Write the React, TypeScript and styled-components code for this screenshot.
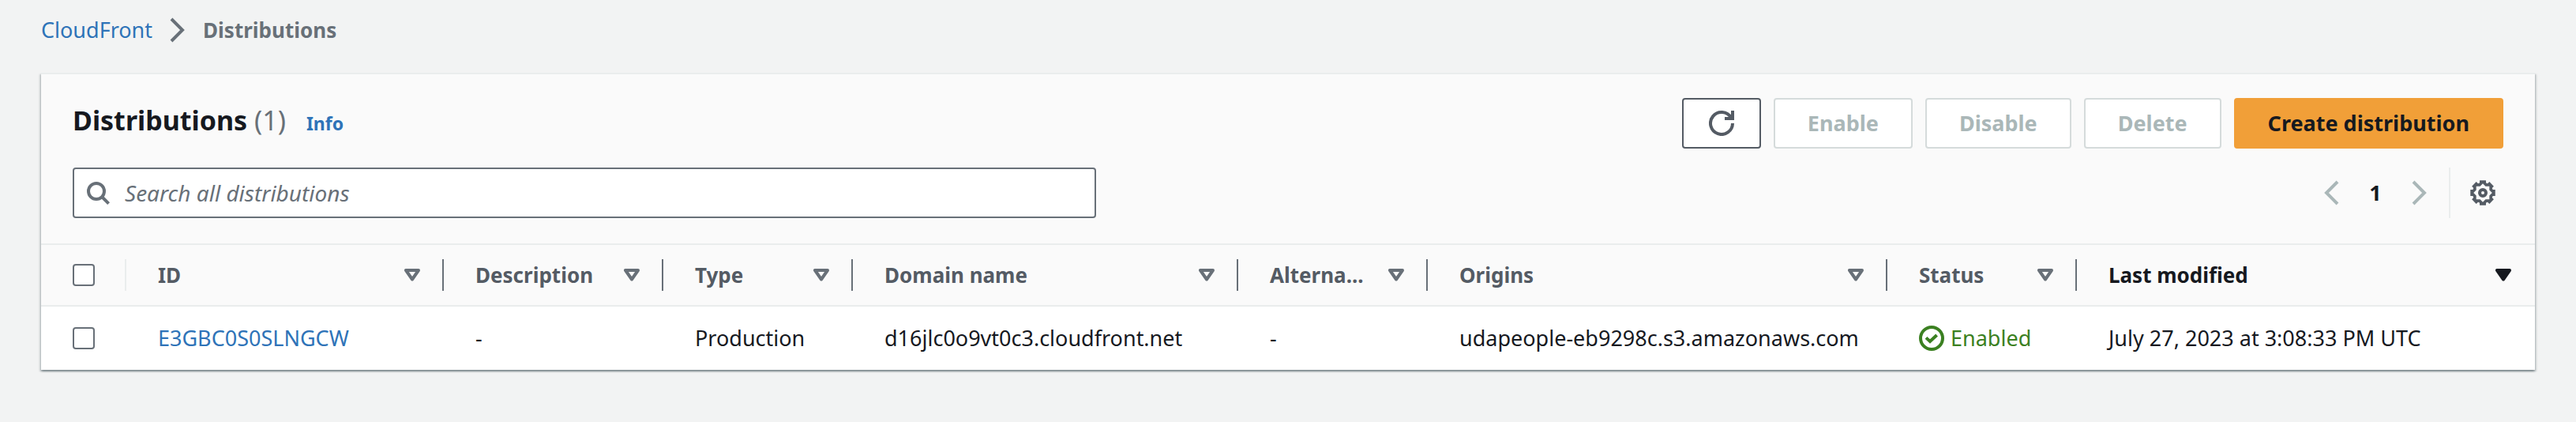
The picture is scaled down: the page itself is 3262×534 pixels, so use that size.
import React from 'react';
import styled, { createGlobalStyle, css } from 'styled-components';

const color = {
  page: '#f2f3f3',
  surface: '#ffffff',
  header: '#fafafa',
  line: '#eaeded',
  text: '#16191f',
  label: '#545b64',
  muted: '#687078',
  disabled: '#aab7b8',
  disabledBorder: '#d5dbdb',
  link: '#2e73b8',
  accent: '#f19f38',
  success: '#3b8021',
};

const GlobalStyle = createGlobalStyle`
  * { box-sizing: border-box; }
  body {
    margin: 0;
    background: ${color.page};
    color: ${color.text};
    font-family: 'Noto Sans', 'Open Sans', sans-serif;
    font-size: 27px;
    line-height: 44px;
  }
`;

const Page = styled.main`
  padding: 16px 52px;
`;

const Breadcrumbs = styled.nav`
  display: flex;
  align-items: center;
  gap: 16px;
  margin-bottom: 32px;
  color: ${color.muted};
`;

const Link = styled.a`
  color: ${color.link};
  text-decoration: none;
`;

const CurrentPage = styled.span`
  font-size: 26px;
  font-weight: 700;
`;

const Icon = styled.svg`
  display: block;
  flex: none;
  width: 32px;
  height: 32px;
  fill: none;
  stroke: currentColor;
  stroke-width: 2;
`;

const Panel = styled.section`
  background: ${color.surface};
  border-top: 2px solid ${color.line};
  box-shadow:
    0 2px 2px 0 rgba(0, 28, 36, 0.3),
    2px 2px 2px 0 rgba(0, 28, 36, 0.15),
    -2px 2px 2px 0 rgba(0, 28, 36, 0.15);
`;

const PanelHeader = styled.header`
  display: flex;
  flex-direction: column;
  gap: 24px;
  padding: 30px 40px 32px;
  background: ${color.header};
`;

const HeaderRow = styled.div`
  display: flex;
  align-items: center;
  justify-content: space-between;
  gap: 40px;
  min-height: 64px;
`;

const TitleGroup = styled.div`
  display: flex;
  align-items: baseline;
  gap: 26px;
  padding-bottom: 4px;
`;

const Title = styled.h1`
  margin: 0;
  font-size: 34px;
  font-weight: 700;
`;

const Counter = styled.span`
  color: ${color.muted};
  font-weight: 400;
`;

const InfoLink = styled(Link)`
  font-size: 23px;
  font-weight: 700;
`;

const Actions = styled.div`
  display: flex;
  gap: 16px;
`;

const Button = styled.button<{ $primary?: boolean }>`
  height: 64px;
  padding: 0 41px;
  border: 2px solid ${color.label};
  border-radius: 4px;
  background: ${color.surface};
  color: ${color.label};
  font: inherit;
  font-weight: 700;
  white-space: nowrap;

  &:disabled {
    border-color: ${color.disabledBorder};
    color: ${color.disabled};
  }

  ${({ $primary }) =>
    $primary &&
    css`
      border-color: ${color.accent};
      background: ${color.accent};
      color: ${color.text};
    `}
`;

const RefreshButton = styled(Button)`
  padding: 0 32px;
`;

const SearchBox = styled.label`
  display: flex;
  flex: 1;
  align-items: center;
  gap: 18px;
  max-width: 1296px;
  height: 64px;
  padding: 0 14px;
  border: 2px solid ${color.muted};
  border-radius: 4px;
  background: ${color.surface};
  color: ${color.muted};
`;

const SearchInput = styled.input`
  flex: 1;
  min-width: 0;
  padding: 0;
  border: 0;
  outline: 0;
  background: transparent;
  color: ${color.text};
  font: inherit;
  font-size: 28px;

  &::placeholder {
    color: ${color.muted};
    font-style: italic;
    opacity: 1;
  }
`;

const Pagination = styled.div`
  display: flex;
  align-items: center;
`;

const IconButton = styled.button`
  padding: 0;
  border: 0;
  background: transparent;
  color: ${color.label};

  &:disabled {
    color: ${color.disabled};
  }
`;

const PageButton = styled(IconButton)`
  width: 80px;
  color: ${color.text};
  font: inherit;
  font-weight: 700;
`;

const Preferences = styled.div`
  display: flex;
  align-items: center;
  height: 64px;
  margin-left: 21px;
  padding: 0 10px 0 25px;
  border-left: 2px solid ${color.line};
`;

const Table = styled.table`
  width: 100%;
  table-layout: fixed;
  border-collapse: separate;
  border-spacing: 0;
`;

const Column = styled.col<{ $width?: number }>`
  width: ${({ $width }) => ($width ? `${$width}px` : 'auto')};
`;

const HeadCell = styled.th`
  height: 80px;
  padding: 0;
  border: solid ${color.line};
  border-width: 2px 0;
  background: ${color.header};
  text-align: left;
`;

const SelectAll = styled.div`
  display: flex;
  align-items: center;
  height: 40px;
  padding-left: 40px;
  border-right: 2px solid ${color.line};
`;

const SortButton = styled.button<{ $active?: boolean }>`
  display: flex;
  align-items: center;
  justify-content: space-between;
  width: 100%;
  height: 40px;
  padding: 0 28px 0 40px;
  border: 0;
  border-right: 2px solid ${({ $active }) => ($active ? 'transparent' : color.muted)};
  background: transparent;
  color: ${({ $active }) => ($active ? color.text : color.label)};
  font: inherit;
  font-size: 26px;
  font-weight: 700;
  white-space: nowrap;
`;

const SortIcon = styled.svg<{ $active?: boolean }>`
  flex: none;
  width: 20px;
  height: 16px;
  color: ${({ $active }) => ($active ? color.text : color.muted)};
  fill: ${({ $active }) => ($active ? 'currentColor' : 'none')};
  stroke: currentColor;
  stroke-width: 4;
  stroke-linejoin: round;
`;

const Cell = styled.td`
  height: 80px;
  padding: 0 0 0 40px;
  white-space: nowrap;
`;

const Checkbox = styled.input`
  display: block;
  appearance: none;
  width: 28px;
  height: 28px;
  margin: 0;
  border: 2px solid ${color.muted};
  border-radius: 4px;
  background: ${color.surface};
`;

const Status = styled.span`
  display: flex;
  align-items: center;
  gap: 8px;
  color: ${color.success};
`;

const columns = [
  { label: 'ID', width: 402 },
  { label: 'Description', width: 278 },
  { label: 'Type', width: 240 },
  { label: 'Domain name', width: 488 },
  { label: 'Alterna...', width: 240 },
  { label: 'Origins', width: 582 },
  { label: 'Status', width: 240 },
  { label: 'Last modified', active: true },
];

const polar = (radius: number, degrees: number) => {
  const a = (degrees * Math.PI) / 180;
  return `${(8 + radius * Math.cos(a)).toFixed(2)} ${(8 + radius * Math.sin(a)).toFixed(2)}`;
};
const teeth = Array.from({ length: 8 }, (_, i) => i * 45);
const gearOutline = teeth
  .map((t) => [polar(6.6, t - 18), polar(8.1, t - 14), polar(8.1, t + 14), polar(6.6, t + 18)].join('L'))
  .join('L');
const gearHole = teeth.map((t) => [polar(5.9, t), polar(4.5, t + 22.5)].join('L')).join('L');

const ChevronRight = () => (
  <Icon viewBox="0 0 16 16" aria-hidden="true">
    <path d="M4 1l7 7-7 7" />
  </Icon>
);

const ChevronLeft = () => (
  <Icon viewBox="0 0 16 16" aria-hidden="true">
    <path d="M12 1L5 8l7 7" />
  </Icon>
);

const GearIcon = () => (
  <Icon viewBox="0 0 16 16" aria-hidden="true">
    <path d={`M${gearOutline}ZM${gearHole}Z`} fill="currentColor" fillRule="evenodd" stroke="none" />
    <circle cx="8" cy="8" r="2" />
  </Icon>
);

export default function App() {
  return (
    <>
      <GlobalStyle />
      <Page>
        <Breadcrumbs aria-label="Breadcrumbs">
          <Link href="#cloudfront">CloudFront</Link>
          <ChevronRight />
          <CurrentPage aria-current="page">Distributions</CurrentPage>
        </Breadcrumbs>

        <Panel>
          <PanelHeader>
            <HeaderRow>
              <TitleGroup>
                <Title>
                  Distributions <Counter>(1)</Counter>
                </Title>
                <InfoLink href="#info">Info</InfoLink>
              </TitleGroup>
              <Actions>
                <RefreshButton type="button" aria-label="Refresh">
                  <Icon viewBox="0 0 16 16" aria-hidden="true">
                    <path d="M15 8a7 7 0 1 1-1-3.6M15 0v5h-5" />
                  </Icon>
                </RefreshButton>
                <Button type="button" disabled>Enable</Button>
                <Button type="button" disabled>Disable</Button>
                <Button type="button" disabled>Delete</Button>
                <Button type="button" $primary>Create distribution</Button>
              </Actions>
            </HeaderRow>
            <HeaderRow>
              <SearchBox>
                <Icon viewBox="0 0 16 16" aria-hidden="true">
                  <circle cx="7" cy="7" r="5" />
                  <path d="M10.5 10.5l4.3 4.3" />
                </Icon>
                <SearchInput type="text" placeholder="Search all distributions" aria-label="Search all distributions" />
              </SearchBox>
              <Pagination>
                <IconButton type="button" aria-label="Previous page" disabled>
                  <ChevronLeft />
                </IconButton>
                <PageButton type="button">1</PageButton>
                <IconButton type="button" aria-label="Next page" disabled>
                  <ChevronRight />
                </IconButton>
                <Preferences>
                  <IconButton type="button" aria-label="Preferences">
                    <GearIcon />
                  </IconButton>
                </Preferences>
              </Pagination>
            </HeaderRow>
          </PanelHeader>

          <Table>
            <colgroup>
              <Column $width={108} />
              {columns.map((c) => (
                <Column key={c.label} $width={c.width} />
              ))}
            </colgroup>
            <thead>
              <tr>
                <HeadCell>
                  <SelectAll>
                    <Checkbox type="checkbox" aria-label="Select all distributions" />
                  </SelectAll>
                </HeadCell>
                {columns.map((c) => (
                  <HeadCell key={c.label} scope="col">
                    <SortButton type="button" $active={c.active}>
                      {c.label}
                      <SortIcon $active={c.active} viewBox="0 0 20 16" aria-hidden="true">
                        <path d="M2 2h16l-8 11.5z" />
                      </SortIcon>
                    </SortButton>
                  </HeadCell>
                ))}
              </tr>
            </thead>
            <tbody>
              <tr>
                <Cell>
                  <Checkbox type="checkbox" aria-label="Select E3GBC0S0SLNGCW" />
                </Cell>
                <Cell>
                  <Link href="#E3GBC0S0SLNGCW">E3GBC0S0SLNGCW</Link>
                </Cell>
                <Cell>-</Cell>
                <Cell>Production</Cell>
                <Cell>d16jlc0o9vt0c3.cloudfront.net</Cell>
                <Cell>-</Cell>
                <Cell>udapeople-eb9298c.s3.amazonaws.com</Cell>
                <Cell>
                  <Status>
                    <Icon viewBox="0 0 16 16" aria-hidden="true">
                      <circle cx="8" cy="8" r="7" />
                      <path d="M4.5 7.7L7 10l4.3-4" />
                    </Icon>
                    Enabled
                  </Status>
                </Cell>
                <Cell>July 27, 2023 at 3:08:33 PM UTC</Cell>
              </tr>
            </tbody>
          </Table>
        </Panel>
      </Page>
    </>
  );
}
